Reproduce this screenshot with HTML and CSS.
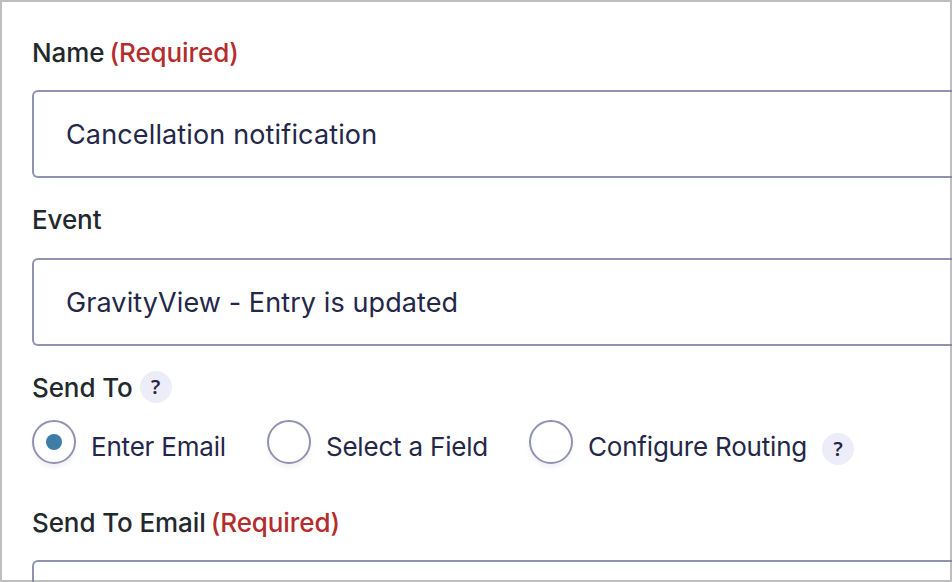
FILE: index.html
```html
<!DOCTYPE html>
<html lang="en">
<head>
  <meta charset="utf-8">
  <title>Notification</title>
  <link rel="stylesheet" href="styles.css">
</head>
<body>
  <form class="settings">
    <div class="field">
      <label class="field-label" for="name">Name <span class="required">(Required)</span></label>
      <input class="text-input" type="text" id="name" name="name" value="Cancellation notification">
    </div>

    <div class="field">
      <label class="field-label" for="event">Event</label>
      <select class="text-input" id="event" name="event">
        <option>GravityView - Entry is updated</option>
      </select>
    </div>

    <div class="field">
      <div class="field-label">Send To <button type="button" class="help">?</button></div>
      <div class="radios">
        <input type="radio" id="to-email" name="to" checked>
        <label class="radio-label" for="to-email">Enter Email</label>
        <input type="radio" id="to-field" name="to">
        <label class="radio-label" for="to-field">Select a Field</label>
        <input type="radio" id="to-routing" name="to">
        <label class="radio-label routing" for="to-routing">Configure Routing</label>
        <button type="button" class="help">?</button>
      </div>
    </div>

    <div class="field">
      <label class="field-label" for="email">Send To Email <span class="required">(Required)</span></label>
      <input class="text-input" type="text" id="email" name="email">
    </div>
  </form>
</body>
</html>
```
FILE: styles.css
```css
* {
  box-sizing: border-box;
}

body {
  margin: 0;
  height: 582px;
  overflow: hidden;
  background-color: #fff;
  color: #23282d;
  font-family: Inter, sans-serif;
  font-size: 26px;
}

/* frame drawn over the content */
body::after {
  content: "";
  position: fixed;
  inset: 0;
  border: 2px solid rgba(128, 128, 128, 0.5);
  pointer-events: none;
}

.settings {
  width: 952px;
  height: 582px;
  overflow: hidden;
  padding: 37px 0 0 32px;
}

.field {
  margin-bottom: 26px;
}

.field-label {
  display: flex;
  align-items: center;
  gap: 5px;
  height: 32px;
  margin-bottom: 22px;
  font-weight: 500;
  line-height: 32px;
  letter-spacing: -0.1px;
  white-space: nowrap;
}

.field:first-child .field-label,
.field:last-child .field-label {
  margin-bottom: 21px;
}

.required {
  color: #b32d2e;
}

.text-input {
  display: block;
  width: 100%;
  height: 88px;
  padding: 0 32px;
  appearance: none;
  background-color: #fff;
  border: 2px solid #9092b2;
  border-right: none;
  border-radius: 6px 0 0 6px;
  color: #242748;
  font-family: inherit;
  font-size: 27px;
  letter-spacing: 0.14px;
}

select.text-input {
  letter-spacing: 0.1px;
}

.help {
  width: 32px;
  height: 32px;
  padding: 0;
  border: none;
  border-radius: 50%;
  background-color: #ecedf8;
  color: #242748;
  font-family: "Noto Sans", sans-serif;
  font-size: 20px;
  font-weight: 600;
  line-height: 32px;
}

.field-label .help {
  margin: -2px 0 0 2px;
}

.radios {
  display: flex;
  height: 44px;
  margin: -6px 0 43px;
}

.radios input {
  flex: none;
  display: flex;
  align-items: center;
  justify-content: center;
  width: 44px;
  height: 44px;
  margin: 0 15px 0 0;
  appearance: none;
  border: 2px solid #9092b2;
  border-radius: 50%;
  box-shadow: 0 4px 4px rgba(18, 25, 97, 0.05);
}

.radios input:checked::before {
  content: "";
  width: 16px;
  height: 16px;
  border-radius: 50%;
  background-color: #3e7da6;
}

.radio-label {
  margin-right: 41px;
  padding-top: 11px;
  color: #242748;
  line-height: 32px;
  letter-spacing: -0.2px;
  white-space: nowrap;
}

.radio-label.routing {
  margin-right: 15px;
}

.radios .help {
  margin-top: 13px;
}
```
